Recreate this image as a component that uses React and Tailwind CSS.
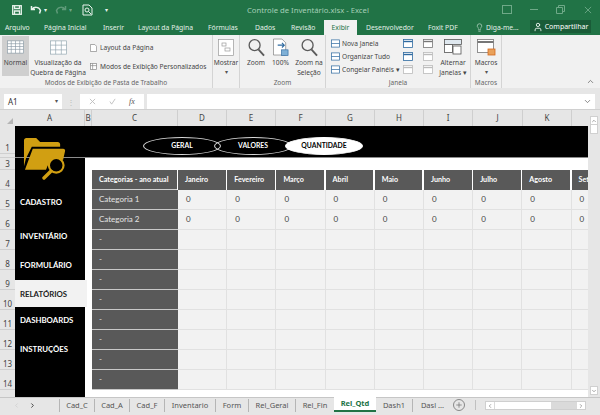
import React from "react";
import { Plus, ChevronLeft, ChevronRight, ChevronUp, ChevronDown, Lightbulb, User } from "lucide-react";

const ui = { fontFamily: '"Noto Sans", "Open Sans", sans-serif' };
const cell = { fontFamily: 'Lato, "Liberation Sans", sans-serif' };

const ribbonTabs = [
  ["Arquivo", "w-[44px] pl-[5px]"],
  ["Página Inicial", "w-[59px]"],
  ["Inserir", "w-[35px]"],
  ["Layout da Página", "w-[70px]"],
  ["Fórmulas", "w-[47px]"],
  ["Dados", "w-[36px]"],
  ["Revisão", "w-[33px]"],
];

const columns = ["A", "B", "C", "D", "E", "F", "G", "H", "I", "J", "K", ""];
const columnWidths = ["w-[70px]", "w-[7px]", "w-[86px]", "w-[49px]", "w-[49px]", "w-[50px]", "w-[49px]", "w-[49px]", "w-[49px]", "w-[50px]", "w-[49px]", "w-[16px]"];

const rowLabels = [
  ["1", "h-[28px]"],
  ["2", "h-[4px]"],
  ["3", "h-[12px]"],
  ["4", "h-[20px]"],
  ["5", "h-[20px]"],
  ["6", "h-[20px]"],
  ["7", "h-[20px]"],
  ["8", "h-[20px]"],
  ["9", "h-[20px]"],
  ["10", "h-[20px]"],
  ["11", "h-[20px]"],
  ["12", "h-[20px]"],
  ["13", "h-[20px]"],
  ["14", "h-[20px]"],
  ["", "h-[7px]"],
];

const months = ["Janeiro", "Fevereiro", "Março", "Abril", "Maio", "Junho", "Julho", "Agosto", "Setembro"];
const rows = ["Categoria 1", "Categoria 2", "-", "-", "-", "-", "-", "-", "-", "-"];

const sheetTabs = [
  ["Cad_C", "w-[35px]"],
  ["Cad_A", "w-[35px]"],
  ["Cad_F", "w-[35px]"],
  ["Inventario", "w-[51px]"],
  ["Form", "w-[33px]"],
  ["Rel_Geral", "w-[47px]"],
  ["Rel_Fin", "w-[39px]"],
];

function GridIcon({ className }) {
  return (
    <svg viewBox="0 0 18 14" className={className} fill="#fff" stroke="#8a9aa5" strokeWidth="0.7">
      <rect x="0.5" y="0.5" width="17" height="13" />
      <path d="M0.5 3.5h17M0.5 6.5h17M0.5 9.5h17M4.5 0.5v13M9 0.5v13M13.5 0.5v13" fill="none" />
    </svg>
  );
}

function PageBreakIcon({ className }) {
  return (
    <svg viewBox="0 0 18 15" className={className} fill="#fff" stroke="#8fa3ad" strokeWidth="0.7">
      <rect x="0.5" y="0.5" width="17" height="14" />
      <path d="M0.5 5h17M0.5 10h17M6 0.5v14M12 0.5v14" fill="none" />
    </svg>
  );
}

function ZoomIcon({ className }) {
  return (
    <svg viewBox="0 0 18 19" className={className} fill="none" stroke="#5b5b5b" strokeWidth="1.4">
      <circle cx="7" cy="7" r="5.8" />
      <path d="M11 11.5l6 6.5" strokeWidth="2" />
    </svg>
  );
}

function SmallPane({ color = "#2f6aa0" }) {
  return (
    <svg viewBox="0 0 10 9" className="w-[10px] h-[9px]" fill="#fff" stroke={color} strokeWidth="0.8">
      <rect x="0.5" y="0.5" width="9" height="8" />
      <path d="M0.5 2.5h9" strokeWidth="1.4" />
    </svg>
  );
}

function BigButton({ icon, lines, caret, className = "" }) {
  return (
    <div className={`flex flex-col items-center shrink-0 ${className}`}>
      <div className="h-[22px] flex items-center justify-center">{icon}</div>
      {lines.map((l) => (
        <span key={l} className="text-[6.6px] leading-[9.5px] text-[#444] whitespace-nowrap">{l}</span>
      ))}
      {caret && <span className="text-[6px] leading-[8px] text-[#555]">▾</span>}
    </div>
  );
}

function Group({ label, className, children }) {
  return (
    <div className={`flex flex-col h-full pt-px border-r border-[#d4d4d4] shrink-0 ${className}`}>
      <div className="flex-1 min-h-0">{children}</div>
      <div className="h-[10px] text-center text-[6.5px] leading-[10px] text-[#666] whitespace-nowrap">{label}</div>
    </div>
  );
}

function FolderLogo({ className }) {
  return (
    <svg viewBox="0 0 44 44" className={className}>
      <path d="M1 30V3.500C1 2 2 1 3.500 1h10l4 4h18c1.500 0 2.500 1 2.500 2.500V10H9L3 22z" fill="#d19f12" />
      <path d="M10 12h31c1.500 0 2.500 1 2 2.500l-2 9a13 13 0 0 0-17 9l-.5 1H2z" fill="#d19f12" />
      <circle cx="34" cy="29" r="7.500" fill="#000" stroke="#d19f12" strokeWidth="2.200" />
      <path d="M28.500 35l-7 7" stroke="#d19f12" strokeWidth="3.500" strokeLinecap="round" />
    </svg>
  );
}

function Ellipse({ label, active }) {
  return (
    <div
      className={`w-[78px] h-[18px] -mr-[7px] rounded-[50%] border flex items-center justify-center text-[6.8px] font-bold ${
        active ? "bg-white border-white text-black" : "border-[#d9d9d9] text-white"
      }`}
      style={cell}
    >
      {label}
    </div>
  );
}

function SideItem({ label, className = "" }) {
  return (
    <div className={`flex items-center pl-[5px] text-[7.8px] font-bold ${className}`} style={cell}>
      {label}
    </div>
  );
}

export default function App() {
  return (
    <div className="w-[600px] h-[415px] overflow-hidden flex flex-col bg-[#e6e6e6]" style={ui}>
      {/* title bar */}
      <div className="h-[20px] shrink-0 bg-[#217346] flex items-center relative text-white">
        <div className="flex items-center pl-[12px] gap-[8px] text-[#e8f3ec]">
          <svg viewBox="0 0 10 10" className="w-[10px] h-[10px]" fill="none" stroke="currentColor" strokeWidth="1.3">
            <rect x="0.700" y="0.700" width="8.600" height="8.600" />
            <path d="M2.500 1v2.500h5V1M2.500 9V6h5v3" />
          </svg>
          <svg viewBox="0 0 12 10" className="w-[12px] h-[10px]" fill="none" stroke="currentColor" strokeWidth="1.500">
            <path d="M1.500 1v3.500H5M2 4.500c2-3 7-3 8.500 1l-1 3" />
          </svg>
          <span className="text-[6px] -ml-[6px]">▾</span>
          <svg viewBox="0 0 12 10" className="w-[12px] h-[10px] opacity-30" fill="none" stroke="currentColor" strokeWidth="1.500">
            <path d="M10.500 1v3.500H7M10 4.500c-2-3-7-3-8.500 1l1 3" />
          </svg>
          <span className="text-[6px] -ml-[6px] opacity-40">▾</span>
          <svg viewBox="0 0 11 12" className="w-[11px] h-[12px] ml-[2px]" fill="none" stroke="currentColor" strokeWidth="1">
            <path d="M1 1h6l3 3v7H1z" />
            <circle cx="5" cy="6" r="2" />
            <path d="M6.500 7.500L9 10" />
          </svg>
          <span className="text-[6px] ml-[4px]">▾</span>
        </div>
        <div className="absolute left-[247px] top-[5px] text-[7.700px] leading-[11px] text-[#a5cfb6]">Controle de Inventário.xlsx - Excel</div>
        <div className="absolute right-0 top-[5px] flex items-center text-[#6fa988]">
          <svg viewBox="0 0 10 9" className="w-[10px] h-[9px] mr-[18px]" fill="none" stroke="currentColor">
            <rect x="0.500" y="0.500" width="9" height="8" />
          </svg>
          <div className="w-[8px] h-px bg-current mr-[18px]" />
          <svg viewBox="0 0 9 9" className="w-[9px] h-[9px] mr-[19px]" fill="none" stroke="currentColor">
            <path d="M2.500 2.500V.5h6v6h-2M.5 2.500h6v6h-6z" />
          </svg>
          <svg viewBox="0 0 9 9" className="w-[8px] h-[8px] mr-[8px]" fill="none" stroke="currentColor">
            <path d="M1 1l7 7M8 1L1 8" />
          </svg>
        </div>
      </div>

      {/* ribbon tabs */}
      <div className="h-[15px] shrink-0 bg-[#217346] flex items-center text-[6.800px] leading-[15px] text-[#e3f0e8] relative">
        {ribbonTabs.map(([label, width]) => (
          <div key={label} className={`${width} whitespace-nowrap shrink-0`}>{label}</div>
        ))}
        <div className="w-[33px] h-[15px] bg-[#f1f1f1] text-[#217346] text-center shrink-0">Exibir</div>
        <div className="w-[71px] pl-[9px] whitespace-nowrap shrink-0">Desenvolvedor</div>
        <div className="w-[47px] whitespace-nowrap shrink-0">Foxit PDF</div>
        <div className="flex items-center gap-[2px] whitespace-nowrap shrink-0">
          <Lightbulb size={9} strokeWidth={1.500} />
          <span>Diga-me...</span>
        </div>
        <div className="absolute left-[530px] top-0 w-[61px] h-[13px] bg-[#1a5c38] flex items-center justify-center gap-[2px] text-white text-[7px]">
          <User size={10} strokeWidth={2} />
          <span>Compartilhar</span>
        </div>
      </div>

      {/* ribbon */}
      <div className="h-[53px] shrink-0 bg-[#f1f1f1] flex relative">
        <Group label="Modos de Exibição de Pasta de Trabalho" className="w-[213px]">
          <div className="flex pl-[2px]">
            <BigButton
              className="w-[27px] h-[40px] bg-[#cfcfcf]"
              icon={<GridIcon className="w-[17px] h-[14px]" />}
              lines={["Normal"]}
            />
            <BigButton
              className="w-[56px] ml-[1px]"
              icon={<PageBreakIcon className="w-[17px] h-[15px]" />}
              lines={["Visualização da", "Quebra de Página"]}
            />
            <div className="flex flex-col pl-[4px] pt-[6px] gap-[8px] text-[6.600px] leading-[11px] text-[#444]">
              <div className="flex items-center gap-[3px] whitespace-nowrap">
                <svg viewBox="0 0 8 9" className="w-[7px] h-[8px]" fill="#fff" stroke="#888" strokeWidth="0.800">
                  <path d="M0.500 0.500h5l2 2v6h-7z" />
                </svg>
                <span>Layout da Página</span>
              </div>
              <div className="flex items-center gap-[3px] whitespace-nowrap">
                <svg viewBox="0 0 8 8" className="w-[7px] h-[7px]" fill="#fff" stroke="#888" strokeWidth="0.800">
                  <rect x="0.500" y="0.500" width="7" height="7" />
                  <path d="M3 0.500v7M0.500 3h7" />
                </svg>
                <span>Modos de Exibição Personalizados</span>
              </div>
            </div>
          </div>
        </Group>
        <Group label="" className="w-[27px]">
          <BigButton
            icon={
              <svg viewBox="0 0 16 17" className="w-[16px] h-[17px]" fill="#fff" stroke="#999" strokeWidth="0.700">
                <rect x="0.500" y="0.500" width="15" height="16" />
                <rect x="4" y="4" width="4" height="3" />
                <rect x="7" y="9" width="5" height="3" />
              </svg>
            }
            lines={["Mostrar"]}
            caret
          />
        </Group>
        <Group label="Zoom" className="w-[86px]">
          <div className="flex pl-[3px]">
            <BigButton className="w-[26px]" icon={<ZoomIcon className="w-[17px] h-[19px]" />} lines={["Zoom"]} />
            <BigButton
              className="w-[23px]"
              icon={
                <svg viewBox="0 0 17 19" className="w-[16px] h-[19px]" fill="#fff" stroke="#777" strokeWidth="0.700">
                  <path d="M0.500 0.500h9l4 4v13h-13z" />
                  <rect x="9" y="12" width="7" height="6" fill="#7fb0d6" stroke="#2f6aa0" />
                  <path d="M5 7h7M9.500 4.500L12 7 9.500 9.500" fill="none" stroke="#2f6aa0" strokeWidth="1.200" />
                </svg>
              }
              lines={["100%"]}
            />
            <BigButton
              className="w-[34px]"
              icon={<ZoomIcon className="w-[17px] h-[19px]" />}
              lines={["Zoom na", "Seleção"]}
            />
          </div>
        </Group>
        <Group label="Janela" className="w-[145px]">
          <div className="flex pl-[5px]">
            <div className="flex flex-col w-[72px] pt-[2px] gap-[2px] text-[6.600px] leading-[11px] text-[#444]">
              {["Nova Janela", "Organizar Tudo", "Congelar Painéis ▾"].map((l) => (
                <div key={l} className="flex items-center gap-[2px] whitespace-nowrap">
                  <svg viewBox="0 0 10 9" className="w-[9px] h-[9px] shrink-0" fill="#fff" stroke="#2f6aa0" strokeWidth="0.800">
                    <rect x="0.500" y="0.500" width="9" height="8" />
                    <path d="M0.500 4.500h9" />
                  </svg>
                  <span>{l}</span>
                </div>
              ))}
            </div>
            <div className="grid grid-cols-2 gap-x-[8px] gap-y-[4px] w-[32px] h-[36px] pt-[3px] shrink-0">
              <SmallPane />
              <SmallPane color="#777" />
              <SmallPane />
              <SmallPane color="#bbb" />
              <SmallPane color="#bbb" />
              <SmallPane color="#bbb" />
            </div>
            <BigButton
              className="w-[30px] ml-[3px]"
              icon={
                <svg viewBox="0 0 18 16" className="w-[18px] h-[16px]" fill="#fff" stroke="#555" strokeWidth="0.800">
                  <rect x="0.500" y="0.500" width="17" height="5" fill="#dfe8ef" />
                  <rect x="0.500" y="5.500" width="8" height="8" />
                  <rect x="9" y="7" width="8" height="8" />
                </svg>
              }
              lines={["Alternar", "Janelas ▾"]}
            />
          </div>
        </Group>
        <Group label="Macros" className="w-[31px]">
          <BigButton
            icon={
              <svg viewBox="0 0 19 17" className="w-[19px] h-[17px]" fill="#fff" stroke="#777" strokeWidth="0.800">
                <rect x="0.500" y="0.500" width="16" height="13" />
                <path d="M0.500 3h16" strokeWidth="2" />
                <rect x="11" y="10" width="7" height="6" fill="#e9a15a" stroke="#d2691e" />
              </svg>
            }
            lines={["Macros"]}
            caret
          />
        </Group>
        <ChevronUp size={9} className="absolute right-[5px] bottom-[2px] text-[#666]" />
      </div>

      {/* formula bar */}
      <div className="h-[22px] shrink-0 flex items-center pt-[6px] pl-[4px] pr-[5px] border-b border-[#d0d0d0]">
        <div className="w-[58px] h-[15px] bg-white flex items-center justify-between px-[4px] text-[8px] text-[#333]">
          <span>A1</span>
          <span className="text-[6px] text-[#555]">▾</span>
        </div>
        <div className="w-[18px] text-center text-[8px] leading-none text-[#bbb]">⋮</div>
        <div className="w-[64px] h-[15px] bg-white flex items-center gap-[13px] pl-[9px] text-[#bbb]">
          <svg viewBox="0 0 8 8" className="w-[7px] h-[7px]" stroke="currentColor" fill="none"><path d="M1 1l6 6M7 1L1 7" /></svg>
          <svg viewBox="0 0 8 8" className="w-[7px] h-[7px]" stroke="currentColor" fill="none"><path d="M1 4l2 3 4-6" /></svg>
          <span className="text-[8px] italic text-[#555]" style={{ fontFamily: '"Liberation Serif", serif' }}>fx</span>
        </div>
        <div className="ml-[3px] flex-1 h-[15px] bg-white flex items-center justify-end pr-[3px]">
          <ChevronDown size={9} className="text-[#666]" />
        </div>
      </div>

      {/* sheet */}
      <div className="flex flex-1 min-h-0">
        <div className="flex flex-col w-[588px] min-w-0">
          <div className="h-[16px] flex shrink-0">
            <div className="w-[15px] shrink-0 flex items-end justify-end pr-[2px] pb-[2px]">
              <div className="w-0 h-0 border-l-[6px] border-l-transparent border-b-[6px] border-b-[#b5b5b5]" />
            </div>
            {columns.map((c, i) => (
              <div key={i} className={`${columnWidths[i]} shrink-0 text-center text-[8px] leading-[16px] text-[#444] border-r border-[#cfcfcf] last:border-r-0`}>
                {c}
              </div>
            ))}
          </div>
          <div className="flex flex-1 min-h-0">
            <div className="w-[15px] shrink-0 flex flex-col overflow-hidden">
              {rowLabels.map(([n, h], i) => (
                <div key={i} className={`${h} shrink-0 text-center text-[8px] leading-[10px] text-[#444] border-b border-[#cfcfcf] flex items-end justify-center overflow-hidden last:border-b-0`}>
                  {n !== "2" && n}
                </div>
              ))}
            </div>
            <div className="flex-1 min-w-0 flex relative overflow-hidden bg-white">
              {/* sidebar */}
              <div className="w-[70px] shrink-0 bg-black flex flex-col text-white">
                <div className="h-[32px] shrink-0 border-b border-[#8c8c8c]" />
                <div className="h-[30px] shrink-0" />
                <SideItem label="CADASTRO" className="h-[30px] shrink-0" />
                <SideItem label="INVENTÁRIO" className="h-[34px] shrink-0 pt-[4px]" />
                <SideItem label="FORMULÁRIO" className="h-[28px] shrink-0" />
                <SideItem label="RELATÓRIOS" className="h-[27px] shrink-0 pt-[2px] bg-[#f2f2f2] text-[#222] w-[72px]" />
                <SideItem label="DASHBOARDS" className="h-[26px] shrink-0 pt-[2px]" />
                <SideItem label="INSTRUÇÕES" className="h-[32px] shrink-0 pt-[2px]" />
              </div>
              <FolderLogo className="absolute left-[8px] top-[11px] w-[43px] h-[43px]" />

              {/* content */}
              <div className="flex-1 min-w-0 flex flex-col overflow-hidden">
                <div className="h-[32px] bg-black shrink-0 flex items-center pl-[58px] pt-[8px] border-b border-[#8c8c8c]">
                  <Ellipse label="GERAL" />
                  <Ellipse label="VALORES" />
                  <Ellipse label="QUANTIDADE" active />
                </div>
                <div className="pl-[7px] pt-[12px]" style={cell}>
                  <div className="flex">
                    <div className="w-[85px] h-[20px] mr-px shrink-0 bg-[#595959] border-b border-[#d0d0d0] text-white text-[7.200px] font-bold leading-[19px] pl-[7px] whitespace-nowrap">
                      Categorias - ano atual
                    </div>
                    {months.map((m) => (
                      <div key={m} className="w-[49.200px] h-[20px] shrink-0 pr-[1.500px]">
                        <div className="h-[20px] bg-[#595959] text-white text-[7.200px] font-bold leading-[19px] pl-[7px] whitespace-nowrap overflow-hidden">{m}</div>
                      </div>
                    ))}
                  </div>
                  {rows.map((r, i) => (
                    <div key={i} className="flex">
                      <div className="w-[86px] h-[20px] shrink-0 bg-[#595959] border-b border-[#c8c8c8] text-[#e4e4e4] text-[8px] leading-[19px] pl-[7px] whitespace-nowrap">
                        {r}
                      </div>
                      {months.map((m) => (
                        <div key={m} className="w-[49.200px] h-[20px] shrink-0 bg-[#f2f2f2] border-r border-b border-[#e1e1e1] text-[8px] leading-[19px] pl-[8px] text-[#444]">
                          {i < 2 && "0"}
                        </div>
                      ))}
                    </div>
                  ))}
                </div>
              </div>
            </div>
          </div>
        </div>

        {/* vertical scrollbar */}
        <div className="w-[12px] shrink-0 flex flex-col items-center pt-[6px] pb-[2px]">
          <div className="w-[8px] h-[9px] bg-white flex items-center justify-center border border-[#d0d0d0]">
            <ChevronUp size={6} className="text-[#555]" />
          </div>
          <div className="w-[8px] h-[10px] bg-white border border-[#d0d0d0] -mt-px" />
          <div className="flex-1" />
          <div className="w-[8px] h-[9px] bg-white flex items-center justify-center border border-[#d0d0d0]">
            <ChevronDown size={6} className="text-[#555]" />
          </div>
        </div>
      </div>

      {/* sheet tabs */}
      <div className="h-[18px] shrink-0 flex items-start text-[7.500px] leading-[15px] text-[#555] border-t border-[#c6c6c6]">
        <div className="w-[59px] h-[14px] flex items-center pl-[13px] gap-[9px] shrink-0 text-[#333]">
          <ChevronLeft size={7} className="text-[#c8c8c8]" />
          <ChevronRight size={7} strokeWidth={3} />
        </div>
        {sheetTabs.map(([t, w]) => (
          <div key={t} className={`${w} text-center border-l border-[#b5b5b5] h-[13px] mt-px leading-[13px] shrink-0`}>{t}</div>
        ))}
        <div className="w-[42px] h-[15px] bg-white text-center text-[#217346] font-bold border-b-2 border-[#217346] shrink-0 leading-[13px] -mt-px">Rel_Qtd</div>
        <div className="w-[36px] text-center h-[13px] mt-px leading-[13px] shrink-0">Dash1</div>
        <div className="w-[40px] text-center border-l border-[#b5b5b5] h-[13px] mt-px leading-[13px] shrink-0 whitespace-nowrap">Dasl ...</div>
        <div className="w-[12px] h-[12px] mt-[1px] ml-[1px] rounded-full border border-[#888] flex items-center justify-center shrink-0">
          <Plus size={8} className="text-[#666]" />
        </div>
        <div className="w-px h-[10px] mt-[2px] ml-[10px] bg-[#c0c0c0] shrink-0" />
        <div className="ml-[9px] w-[101px] h-[9px] mt-[3px] bg-[#dadada] flex items-center justify-between shrink-0 border border-[#cfcfcf]">
          <div className="flex h-full">
            <div className="w-[8px] bg-white flex items-center justify-center"><ChevronLeft size={6} /></div>
            <div className="w-[56px] ml-px bg-white" />
          </div>
          <div className="w-[8px] h-full bg-white flex items-center justify-center"><ChevronRight size={6} /></div>
        </div>
      </div>
    </div>
  );
}
